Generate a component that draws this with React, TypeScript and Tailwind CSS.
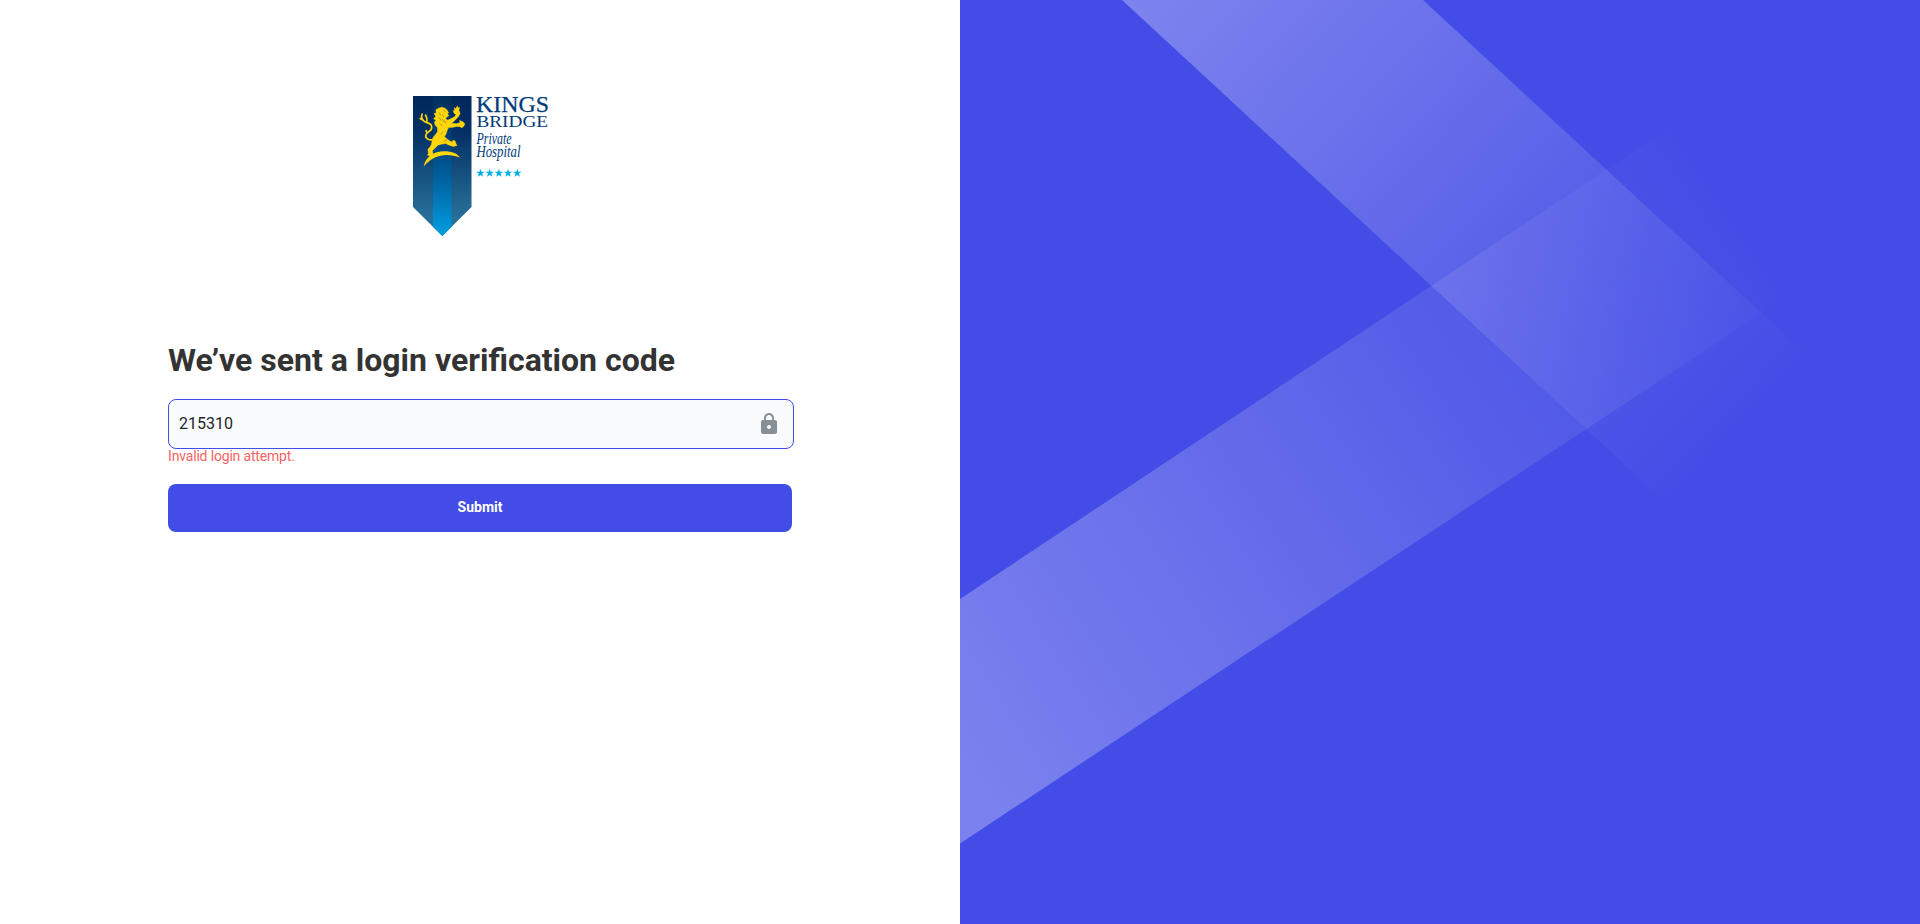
import React from "react";

function Logo() {
  return (
    <svg className="ml-1 overflow-visible" width="140" height="144" viewBox="0 0 140 144" role="img" aria-label="Kingsbridge Private Hospital">
      <defs>
        <linearGradient id="banner" x1="0" y1="0" x2="0" y2="1">
          <stop offset="0" stopColor="#00275a" />
          <stop offset="0.25" stopColor="#042f64" />
          <stop offset="0.8" stopColor="#236a93" />
          <stop offset="1" stopColor="#2a78a3" />
        </linearGradient>
        <linearGradient id="stripe" x1="0" y1="0" x2="0" y2="1">
          <stop offset="0" stopColor="#00305c" />
          <stop offset="0.35" stopColor="#00437c" />
          <stop offset="0.65" stopColor="#0069a8" />
          <stop offset="1" stopColor="#009fe3" />
        </linearGradient>
        <clipPath id="bannerShape">
          <path d="M1 0H59.500V111L30.300 140L1 111Z" />
        </clipPath>
      </defs>
      <g clipPath="url(#bannerShape)">
        <rect x="1" width="59" height="140" fill="url(#banner)" />
        <rect x="21" width="18.500" height="140" fill="url(#stripe)" />
      </g>
      <g transform="translate(1 5.500) scale(.33333)">
        <path
          fill="#ffd60a"
          d="M74 24L82 19L92 16L102 19L109 25L113 33L110 36L114 42L108 45L104 50L110 55L120 51L133 44L136 38L130 34L127 26L132 27L131 17L136 21L140 12L142 18L147 17L145 26L149 34L144 44L136 52L129 59L122 64L138 66L149 62L147 56L157 60L163 65L161 72L155 78L146 74L138 74L122 77L114 76L109 85L105 97L100 105L108 111L116 117L124 121L126 116L133 117L136 126L139 131L128 134L118 131L112 129L104 125L90 127L80 130L74 136L68 142L63 147L65 158L58 163L48 160L51 154L49 143L55 136L60 128L62 118L65 107L73 98L79 90L79 78L72 70L69 62L74 56L67 50L74 43L68 36L75 33Z"
          stroke="#ffd60a"
          strokeWidth="1.500"
          transform="matrix(.97 0 0 1 -3 1)"
        />
        <path fill="#ffd60a" d="M32 195C37 166 63 149 93 149C118 149 134 156 141 168C114 158 88 158 66 168C52 175 42 183 32 195Z" />
        <path
          d="M61 115C45 117 35 108 39 99C43 90 58 90 56 76C55 61 40 67 33 59C26 53 24 45 28 36M42 61C43 54 42 48 37 39M32 57L20 50M44 94C40 92 39 89 40 85"
          fill="none"
          stroke="#ffd60a"
          strokeWidth="5"
        />
        <path
          d="M78 33L83 42M88 39L93 47M78 48L85 57M87 52L94 62M80 66L88 74M95 57L99 66M91 26L97 30M82 99L91 91M104 114L91 120"
          fill="none"
          stroke="#3f4a38"
          strokeWidth="1.700"
          opacity=".7"
        />
      </g>
      <g fill="#003a78" fontFamily="Liberation Serif, serif">
        <text x="64" y="16" fontSize="24" stroke="#003a78" strokeWidth=".25" textLength="73" lengthAdjust="spacingAndGlyphs">KINGS</text>
        <text x="64.500" y="31.300" fontSize="16" textLength="71.500" lengthAdjust="spacingAndGlyphs">BRIDGE</text>
        <g fontStyle="italic" fontSize="17">
          <text x="64.500" y="47.500" textLength="35" lengthAdjust="spacingAndGlyphs">Private</text>
          <text x="64.500" y="61" textLength="44" lengthAdjust="spacingAndGlyphs">Hospital</text>
        </g>
      </g>
      <g fill="#00aee6">
        {[68.500, 77.700, 86.900, 96.100, 105.300].map((x) => (
          <path key={x} transform={`translate(${x} 77)`} d="M0-4.200L1-1.200H4.300L1.700.6L2.700 3.700L0 1.900L-2.700 3.700L-1.700.6L-4.300-1.200H-1Z" />
        ))}
      </g>
    </svg>
  );
}

function LockIcon() {
  return (
    <svg width="24" height="24" viewBox="0 0 24 24" fill="#868e96" aria-hidden="true">
      <path d="M18 8h-1V6c0-2.760-2.240-5-5-5S7 3.240 7 6v2H6c-1.100 0-2 .9-2 2v10c0 1.100.9 2 2 2h12c1.100 0 2-.9 2-2V10c0-1.100-.9-2-2-2zm-6 9c-1.100 0-2-.9-2-2s.9-2 2-2 2 .9 2 2-.9 2-2 2zm3.100-9H8.900V6c0-1.710 1.390-3.100 3.100-3.100s3.100 1.390 3.100 3.100v2z" />
    </svg>
  );
}

function Artwork() {
  return (
    <svg className="block h-full w-full" viewBox="0 0 960 924" preserveAspectRatio="none" aria-hidden="true">
      <defs>
        <linearGradient id="fall" gradientUnits="userSpaceOnUse" x1="252" y1="-83" x2="792" y2="416">
          <stop offset="0" stopColor="#fff" stopOpacity=".31" />
          <stop offset="1" stopColor="#fff" stopOpacity="0" />
        </linearGradient>
        <linearGradient id="rise" gradientUnits="userSpaceOnUse" x1="0" y1="770" x2="796" y2="242">
          <stop offset="0" stopColor="#fff" stopOpacity=".3" />
          <stop offset="1" stopColor="#fff" stopOpacity="0" />
        </linearGradient>
      </defs>
      <path d="M162 0H463L960 459.500V737.500Z" fill="url(#fall)" />
      <path d="M0 599L900 1V248L0 843.500Z" fill="url(#rise)" />
    </svg>
  );
}

export default function App() {
  return (
    <main className="flex h-screen min-h-[924px] w-full bg-white font-['Roboto',sans-serif]">
      <section className="flex w-1/2 flex-col px-[168px] pt-24">
        <div className="flex h-36 justify-center">
          <Logo />
        </div>
        <form className="mt-[100px] flex flex-col" onSubmit={(e) => e.preventDefault()}>
          <h1 className="h-[59px] text-[32px] leading-10 font-bold whitespace-nowrap text-[#333]">
            We’ve sent a login verification code
          </h1>
          <div className="flex h-[50px] w-[626px] items-center rounded-lg border border-[#434ce6] bg-[#fafbfd] pr-3 pl-2.5">
            <input className="min-w-0 flex-1 bg-transparent text-base text-[#212529] outline-none" defaultValue="215310" aria-label="Verification code" />
            <LockIcon />
          </div>
          <p className="h-[35px] text-sm leading-[15px] tracking-[-0.17px] text-[#f56464]">Invalid login attempt.</p>
          <button className="h-12 w-full rounded-lg bg-[#434ce6] pb-0.5 text-sm font-bold text-white">Submit</button>
        </form>
      </section>
      <aside className="w-1/2 bg-[#434ce6]">
        <Artwork />
      </aside>
    </main>
  );
}
